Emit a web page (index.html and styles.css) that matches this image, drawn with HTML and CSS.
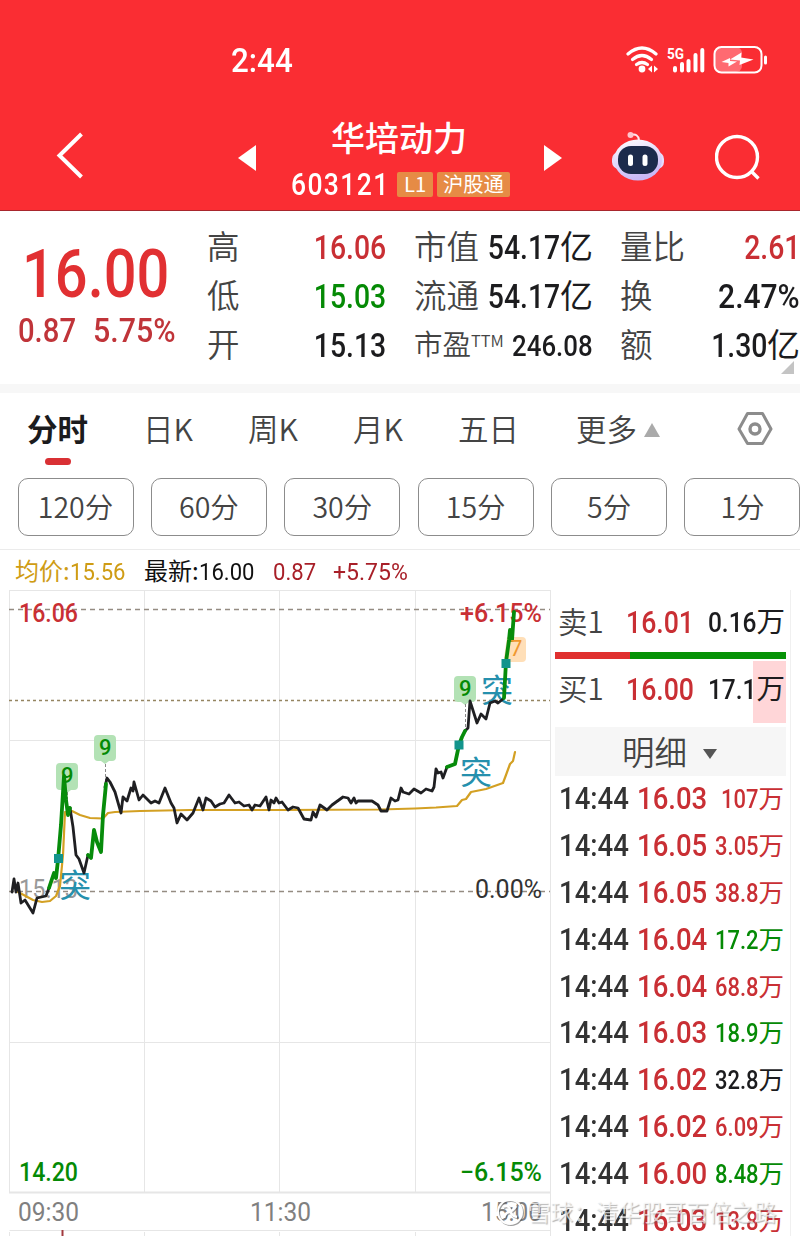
FILE: index.html
```html
<!DOCTYPE html>
<html lang="zh-CN">
<head>
  <meta charset="UTF-8" />
  <meta name="viewport" content="width=device-width, initial-scale=1.0"/>
  <title>华培动力 603121</title>
  <link rel="stylesheet" href="styles.css">
</head>
<body>
  <header class="header">
    <div class="statusbar">
      <span class="clock num">2:44</span>
      <svg class="status-icons" width="146" height="34" viewBox="0 0 146 34">
        <g fill="none" stroke="#fff" stroke-width="3.2" stroke-linecap="round">
          <path d="M4 11 Q18 -1 32 11"/>
          <path d="M8.500 16.500 Q18 8.500 27.500 16.500"/>
          <path d="M12.500 21.500 Q18 17.500 23.500 21.500"/>
        </g>
        <circle cx="18" cy="26" r="3.400" fill="#fff"/>
        <path d="M28 22.500v7l-4-3.500zM30 22.500v7l4-3.500z" fill="#fff"/>
        <text class="net" x="43" y="16" textLength="17" lengthAdjust="spacingAndGlyphs">5G</text>
        <g stroke="#fff" stroke-width="4" stroke-linecap="round">
          <path d="M51 25v2.500M58 21v6.500M64.500 18v9.500M71.500 12v15.500M78.300 7v20.500"/>
        </g>
        <rect x="91" y="4" width="27" height="25" rx="6" fill="#ff6a71"/>
        <rect x="90.500" y="4" width="47" height="25.500" rx="7" fill="none" stroke="#fff" stroke-width="2"/>
        <path d="M141.500 14v6" stroke="#fff" stroke-width="3" stroke-linecap="round"/>
        <path d="M117.500 9.500l-.5 5 12.500 2-14 5.500.5-4.500-10-1z" fill="#fff"/>
        <path d="M97.500 19l8.500-4v3l7 .5-8.500 5v-3.500z" fill="#fff"/>
      </svg>
    </div>
    <nav class="titlebar">
      <svg class="back" width="28" height="48" viewBox="0 0 28 48"><path d="M25.500 2L3.500 23.500L25.500 45" fill="none" stroke="#fff" stroke-width="4"/></svg>
      <svg class="prev" width="18" height="26" viewBox="0 0 18 26"><path d="M18 0v26L0 13z" fill="#fff"/></svg>
      <div class="stock">
        <h1>华培动力</h1>
        <div class="code"><span class="code-no">603121</span><span class="tag tag-l1">L1</span><span class="tag">沪股通</span></div>
      </div>
      <svg class="next" width="18" height="26" viewBox="0 0 18 26"><path d="M0 0v26L18 13z" fill="#fff"/></svg>
      <svg class="robot" width="54" height="50" viewBox="0 0 54 50">
        <defs>
          <linearGradient id="shell" x1="0" y1="0" x2="0.3" y2="1">
            <stop offset="0" stop-color="#fff"/><stop offset="1" stop-color="#c9b8f6"/>
          </linearGradient>
        </defs>
        <path d="M20 4Q27 2 28 9" fill="none" stroke="#ffe6ee" stroke-width="2"/>
        <circle cx="19.500" cy="4" r="3" fill="#ffc4cc"/>
        <rect x="1" y="21" width="52" height="17" rx="7" fill="#e6dcfb"/>
        <ellipse cx="27" cy="29" rx="24" ry="20.500" fill="url(#shell)"/>
        <rect x="7" y="15" width="40" height="28" rx="13" fill="#1c2b4c"/>
        <rect x="17" y="23.500" width="5" height="11.500" rx="2.500" fill="#fff"/>
        <rect x="31.500" y="23.500" width="5" height="11.500" rx="2.500" fill="#fff"/>
      </svg>
      <svg class="search" width="48" height="48" viewBox="0 0 48 48"><circle cx="22" cy="23" r="20.500" fill="none" stroke="#fff" stroke-width="3.400"/><path d="M36 37l7.500 7.500" stroke="#fff" stroke-width="3.400"/></svg>
    </nav>
  </header>

  <section class="quote">
    <div class="last">
      <div class="price num">16.00</div>
      <div class="change"><span class="num">0.87</span><span class="num pct">5.75%</span></div>
    </div>
    <dl class="col">
      <dt>高</dt><dd class="red"><span class="num">16.06</span></dd>
      <dt>低</dt><dd class="green"><span class="num">15.03</span></dd>
      <dt>开</dt><dd><span class="num">15.13</span></dd>
    </dl>
    <dl class="col">
      <dt>市值</dt><dd><span class="num">54.17</span>亿</dd>
      <dt>流通</dt><dd><span class="num">54.17</span>亿</dd>
      <dt class="ttm">市盈<sup>TTM</sup></dt><dd class="pe"><span class="num">246.08</span></dd>
    </dl>
    <dl class="col col-last">
      <dt>量比</dt><dd class="red"><span class="num">2.61</span></dd>
      <dt>换</dt><dd><span class="num pct">2.47%</span></dd>
      <dt>额</dt><dd><span class="num">1.30</span>亿</dd>
    </dl>
    <i class="corner"></i>
  </section>

  <nav class="tabs">
    <a class="active">分时</a>
    <a>日K</a>
    <a>周K</a>
    <a>月K</a>
    <a>五日</a>
    <a class="more">更多<i class="up"></i></a>
    <svg class="gear" width="36" height="36" viewBox="0 0 36 36"><g fill="none" stroke="#8c8c8c"><path d="M10.500 2.500h15L34 18l-8.500 14.500h-15L2 18z" stroke-width="3" stroke-linejoin="round"/><circle cx="18" cy="18" r="5" stroke-width="3.400"/></g></svg>
  </nav>
  <div class="periods">
    <button>120分</button>
    <button>60分</button>
    <button>30分</button>
    <button>15分</button>
    <button>5分</button>
    <button>1分</button>
  </div>

  <div class="legend">
    <span class="avg">均价:<b class="num">15.56</b></span>
    <span class="now">最新:<b class="num">16.00</b></span>
    <span class="diff num">0.87</span>
    <span class="rate num">+5.75%</span>
  </div>

  <main class="main">
    <svg class="chart" width="552" height="646" viewBox="0 590 552 646">
      <g class="grid">
        <path d="M9.500 590.500H550.500M9.500 740.500H550.500M9.500 1042.500H550.500M9.500 1230.500H550.500"/>
        <path d="M9.500 590V1192M144.500 590V1192M279.500 590V1192M415.500 590V1192M550.500 590V1236"/>
        <path d="M9.500 1232V1236M144.500 1232V1236M279.500 1232V1236M415.500 1232V1236"/>
        <path d="M9 1192.500H551" stroke-width="2"/>
      </g>
      <path class="dash" d="M9 609.500H550M9 891.500H550"/>
      <path class="dots" d="M9 700.500H550"/>
      <path d="M62.500 1230V1236" stroke="#a23a3e" stroke-width="2"/>

      <text class="label red" x="19" y="622" textLength="59" lengthAdjust="spacingAndGlyphs">16.06</text>
      <text class="label red" x="460" y="622" textLength="82" lengthAdjust="spacingAndGlyphs">+6.15%</text>
      <text class="label base" x="19" y="898" textLength="59" lengthAdjust="spacingAndGlyphs">15.13</text>
      <text class="label dark" x="475" y="898" textLength="67" lengthAdjust="spacingAndGlyphs">0.00%</text>
      <text class="label green" x="19" y="1181" textLength="59" lengthAdjust="spacingAndGlyphs">14.20</text>
      <text class="label green" x="460" y="1181" textLength="82" lengthAdjust="spacingAndGlyphs">−6.15%</text>
      <text class="label time" x="18" y="1221" textLength="61" lengthAdjust="spacingAndGlyphs">09:30</text>
      <text class="label time" x="250" y="1221" textLength="61" lengthAdjust="spacingAndGlyphs">11:30</text>
      <text class="label time" x="481" y="1221" textLength="61" lengthAdjust="spacingAndGlyphs">15:00</text>

      <g class="pin">
        <path d="M60 763h14a4 4 0 0 1 4 4v19a4 4 0 0 1-4 4h-3l-4 3-4-3h-3a4 4 0 0 1-4-4v-19a4 4 0 0 1 4-4z"/>
        <path d="M98 735h14a4 4 0 0 1 4 4v18a4 4 0 0 1-4 4h-3l-4 3-4-3h-3a4 4 0 0 1-4-4v-18a4 4 0 0 1 4-4z"/>
        <path d="M458 676h14a4 4 0 0 1 4 4v18a4 4 0 0 1-4 4h-3l-4 3-4-3h-3a4 4 0 0 1-4-4v-18a4 4 0 0 1 4-4z"/>
      </g>
      <path class="pin7" d="M507 637h15a4 4 0 0 1 4 4v17a4 4 0 0 1-4 4h-13l-5-4z"/>
      <path class="stem" d="M105.500 764V780M465.500 704V730M67.500 792V806"/>

      <text class="tu" x="59" y="897">突</text>
      <text class="tu" x="481" y="702">突</text>
      <text class="tu" x="460" y="784">突</text>
      <polyline class="line avg-line" points="16,891 20,893 33,900 42,902 50,901 56,896 60,886 63,855 65,812 72,811 80,815 90,818 103,818.500 108,813 115,812 140,811 190,810 280,810 380,809.500 415,808.500 436,807.500 457,806 462,800 466,799 471,792 486,789 503,783 506,775 510,764 513,761 515,752"/>
      <g class="line price-line">
        <polyline points="12,892 14,879 16,892 18,883 21,903 25,900 33,913 37,898 46,896 49,888"/>
        <polyline points="70,808 73,827 76,855 79,859 84,873 88,855"/>
        <polyline points="105,787 107,778 110,782 115,792 121,813 123,797 127,801 131,788 133,791 134,782 139,800 143,795 151,803 155,801 159,803 165,788 171,803 174,808 177,823 181,814 187,820 193,813 199,798 203,810 206,798 211,801 215,807 220,804 224,803 229,795 235,803 239,802 244,806 249,805 252,810 255,805 260,806 266,797 269,810 271,800 274,803 276,798 279,803 282,802 288,810 293,807 298,808 304,819 311,820 313,812 316,817 320,805 327,810 332,805 343,797 348,798 351,803 354,798 356,803 358,801 372,801 378,805 381,811 387,811 391,798 395,801 398,800 401,788 403,792 409,794 414,789 421,793 426,789 432,791 434,787 436,769 438,773 441,772 443,778 447,767"/>
        <polyline points="465,731 468,728 470,701 477,723 481,714 486,719 490,703 495,701 498,703 503,699"/>
      </g>
      <g class="line up-line">
        <polyline points="49,888 54,873 56,878 58,860 61,825 64,776 66,800 68,815 70,808"/>
        <polyline points="88,855 91,858 94,830 97,842 101,852 103,815 106,784"/>
        <polyline points="447,767 455,764 459,745 462,737 465,731"/>
        <polyline points="504,698 506,662 509,640 510,630 512,640 514,612"/>
      </g>
      <g class="mark"><rect x="54" y="854" width="9" height="9"/><rect x="454.500" y="740.500" width="9" height="9"/><rect x="501.500" y="659" width="9" height="9"/></g>
      <text class="pin-no" x="61" y="783">9</text>
      <text class="pin-no" x="99" y="755">9</text>
      <text class="pin-no" x="459" y="696">9</text>
      <text class="pin-no seven" x="510" y="656">7</text>
    </svg>

    <aside class="book">
      <div class="level"><span class="side">卖1</span><span class="num lp">16.01</span><span class="lv"><b class="num">0.16</b>万</span></div>
      <div class="ratio"><i class="sell"></i><i class="buy"></i></div>
      <div class="level bid"><span class="side">买1</span><span class="num lp">16.00</span><span class="lv"><b class="num">17.1</b>万</span></div>
      <div class="detail-head">明细<i class="down"></i></div>
      <ul class="ticks">
        <li><span class="num t">14:44</span><span class="num p">16.03</span><span class="v red"><b class="num">107</b>万</span></li>
        <li><span class="num t">14:44</span><span class="num p">16.05</span><span class="v red"><b class="num">3.05</b>万</span></li>
        <li><span class="num t">14:44</span><span class="num p">16.05</span><span class="v red"><b class="num">38.8</b>万</span></li>
        <li><span class="num t">14:44</span><span class="num p">16.04</span><span class="v green"><b class="num">17.2</b>万</span></li>
        <li><span class="num t">14:44</span><span class="num p">16.04</span><span class="v red"><b class="num">68.8</b>万</span></li>
        <li><span class="num t">14:44</span><span class="num p">16.03</span><span class="v green"><b class="num">18.9</b>万</span></li>
        <li><span class="num t">14:44</span><span class="num p">16.02</span><span class="v"><b class="num">32.8</b>万</span></li>
        <li><span class="num t">14:44</span><span class="num p">16.02</span><span class="v red"><b class="num">6.09</b>万</span></li>
        <li><span class="num t">14:44</span><span class="num p">16.00</span><span class="v green"><b class="num">8.48</b>万</span></li>
        <li><span class="num t">14:44</span><span class="num p">16.03</span><span class="v red"><b class="num">13.8</b>万</span></li>
      </ul>
    </aside>
  </main>

  <div class="watermark">
    <svg width="28" height="28" viewBox="0 0 28 28"><circle cx="14" cy="14" r="12" fill="none" stroke="#fff" stroke-width="2"/><path d="M7 9q6-3 7 3t7 7M20 8q-3 5-7 6t-5 6" fill="none" stroke="#fff" stroke-width="2.500"/></svg>
    <span>雪球：清华股哥百倍之路</span>
  </div>
</body>
</html>
```
FILE: styles.css
```css
* {
  box-sizing: border-box;
}
body {
  margin: 0;
  width: 800px;
  height: 1236px;
  overflow: hidden;
  position: relative;
  background: #fff;
  color: #1c1c1e;
  font-family: 'Noto Sans CJK SC', sans-serif;
}
h1, dl, dd, ul {
  margin: 0;
  padding: 0;
}
b {
  font-weight: inherit;
}
/* narrow figures, squeezed from Roboto */
.num {
  display: inline-block;
  font-family: Roboto, 'Noto Sans CJK SC', sans-serif;
  font-weight: 500;
  transform: scaleX(0.86);
  transform-origin: left center;
  white-space: nowrap;
}
.red { color: #c92f34; fill: #c92f34; }
.green { color: #058a05; fill: #058a05; }

/* header */
.header {
  height: 211px;
  background: #fa2d33;
  border-bottom: 1px solid #a8262d;
  color: #fff;
}
.statusbar {
  height: 88px;
  padding: 43px 0 0 231px;
  display: flex;
  align-items: flex-start;
}
.clock {
  width: 391px;
  font-size: 33px;
  line-height: 36px;
  transform: scaleX(0.95);
}
.status-icons {
  margin-left: 2px;
}
.net {
  font: 700 15px Roboto, sans-serif;
  fill: #fff;
}
.titlebar {
  height: 122px;
  padding-top: 28px;
  display: flex;
  align-items: flex-start;
}
.back { margin: 16px 0 0 56px; }
.prev { margin: 29px 0 0 154px; }
.stock {
  width: 220px;
  margin: 0 0 0 35px;
}
.stock h1 {
  padding-left: 40px;
  font-size: 34px;
  font-weight: 500;
  line-height: 41px;
}
.code {
  display: flex;
  align-items: center;
  height: 28px;
  margin-top: 13px;
}
.code-no {
  width: 106px;
  padding-top: 2px;
  font: 500 31px/28px Roboto, sans-serif;
  letter-spacing: 1.600px;
  transform: scaleX(0.855);
  transform-origin: left;
}
.tag {
  height: 25px;
  padding: 0 6px;
  background: #e68b45;
  border-radius: 2px;
  font-size: 20.300px;
  line-height: 23px;
}
.tag-l1 {
  width: 36px;
  margin-right: 4px;
  padding: 0 7px;
}
.next { margin: 29px 0 0 33px; }
.robot { margin: 15px 0 0 49px; }
.search { margin: 18px 0 0 50px; }

/* quote panel */
.quote {
  position: relative;
  display: grid;
  grid-template-columns: 207px 179px 179px 180px;
  height: 182px;
  border-bottom: 9px solid #f7f7f7;
}
.price {
  margin: 33px 0 0 22px;
  color: #e13032;
  font-size: 66px;
  line-height: 62px;
  transform: scaleX(0.875);
}
.change {
  display: flex;
  padding-left: 18px;
  margin-top: 6px;
  color: #c03439;
  font-size: 32.500px;
  line-height: 38px;
}
.change .num {
  width: 75px;
  transform: scaleX(0.9);
}
.change .pct {
  transform: scaleX(0.935);
}
.col {
  display: grid;
  grid-template-columns: 60px 1fr;
  grid-auto-rows: 49px;
  padding-top: 12px;
  line-height: 44px;
}
.col + .col {
  margin-left: 28px;
  margin-right: -28px;
}
.col + .col-last {
  margin-left: 55px;
  margin-right: -55px;
}
.col dt {
  font-size: 32.500px;
  font-weight: 350;
  color: #444;
  white-space: nowrap;
}
.col dd {
  font-size: 33px;
  line-height: 45px;
  text-align: right;
  white-space: nowrap;
}
.col .num {
  transform-origin: right center;
}
.col .pct {
  transform: scaleX(0.91);
}
.col .ttm {
  font-size: 28.500px;
}
.ttm sup {
  font-size: 16.500px;
  line-height: 0;
  vertical-align: 8px;
}
.col .pe {
  font-size: 30px;
}
.corner {
  position: absolute;
  right: 6px;
  bottom: 10px;
  border-left: 13px solid transparent;
  border-bottom: 13px solid #c4c4c4;
}

/* tabs */
.tabs {
  height: 85px;
  display: flex;
  color: #444;
  font-size: 30.500px;
  font-weight: 350;
  line-height: 70px;
}
.tabs a { position: relative; width: 105px; white-space: nowrap; }
.tabs .active {
  width: 117px;
  padding-left: 27px;
  margin-right: 26px;
  color: #1b1b1d;
  font-weight: 700;
}
.active::after {
  content: '';
  position: absolute;
  left: 45px;
  top: 65px;
  width: 26px;
  height: 7px;
  border-radius: 4px;
  background: #d93034;
}
.tabs .more { width: 161px; margin-left: 13px; }
.up {
  display: inline-block;
  margin-left: 7px;
  vertical-align: 4px;
  border: 8px solid transparent;
  border-top: 0;
  border-bottom: 14px solid #aaa;
}
.gear { margin-top: 18px; }
.periods {
  display: flex;
  gap: 17.400px;
  height: 72px;
  padding-left: 17.500px;
  border-bottom: 1px solid #ebebeb;
}
.periods button {
  flex: 0 0 116px;
  height: 58px;
  padding: 0 0 3px;
  border: 1px solid #8c8c8c;
  border-radius: 10px;
  background: #fff;
  color: #444;
  font: 350 28.500px 'Noto Sans CJK SC', sans-serif;
}

/* legend line above the chart */
.legend {
  display: flex;
  height: 40px;
  padding-left: 15px;
  color: #111;
  font-size: 24px;
  line-height: 39px;
  white-space: nowrap;
}
.legend .num { font-weight: 400; transform: scaleX(0.92); }
.avg { width: 129px; color: #cf9c14; }
.now { width: 129px; }
.diff, .rate { width: 60px; color: #a81f28; line-height: 44px; }
.legend .rate { transform: scaleX(0.96); }

/* chart */
.main {
  display: flex;
  height: 646px;
}
.chart {
  flex: none;
  display: block;
}
.grid {
  fill: none;
  stroke: #e6e6e6;
}
.dash {
  stroke: #958c82;
  stroke-width: 1.300;
  stroke-dasharray: 5 4;
}
.dots {
  stroke: #958561;
  stroke-width: 1.700;
  stroke-dasharray: 3 3;
}
.stem {
  stroke: #888;
  stroke-dasharray: 3 2;
}
.label {
  font: 500 26px Roboto, sans-serif;
}
.base { fill: #999; font-weight: 400; }
.dark { fill: #333; font-weight: 400; }
.time { fill: #808080; font-weight: 400; }
.line {
  fill: none;
  stroke-width: 2.800;
  stroke-linejoin: round;
  stroke-linecap: round;
}
.avg-line { stroke: #d3a023; stroke-width: 2.200; }
.price-line { stroke: #1f1f22; }
.up-line { stroke: #078c0b; stroke-width: 3.800; }
.mark { fill: #12948c; }
.pin { fill: #b3e2b5; }
.pin7 { fill: #ffdfb8; }
.pin-no {
  font: 500 22px Roboto, sans-serif;
  fill: #058a05;
}
.seven { fill: #f0982e; font-weight: 400; }
.tu {
  font: 400 32px 'Noto Sans CJK SC', sans-serif;
  fill: #2590ad;
}

/* order book */
.book {
  width: 239px;
  padding-left: 3px;
  padding-right: 4px;
  border-right: 1px solid #f0f0f0;
}
.level {
  display: flex;
  height: 62px;
  padding-left: 3px;
  line-height: 64px;
}
.side {
  width: 68px;
  margin-top: -2px;
  color: #444;
  font-size: 29.500px;
  font-weight: 350;
}
.lp {
  width: 82px;
  margin-top: 1px;
  color: #c92f34;
  font-size: 31px;
}
.lv {
  width: 77px;
  display: flex;
  justify-content: flex-end;
  align-items: baseline;
  margin-top: -2px;
  font-size: 28.500px;
}
.lv .num, .v .num {
  transform-origin: right center;
}
.ratio {
  display: flex;
  height: 7px;
}
.sell { width: 75px; background: #e0302f; }
.buy { flex: 1; background: #069206; }
.bid {
  margin-top: 2px;
  line-height: 56px;
  background: linear-gradient(#ffd6d8, #ffd6d8) right / 33px 100% no-repeat;
}
.detail-head {
  height: 49px;
  margin: 4px 0 -3px;
  padding-left: 67px;
  background: #f6f6f6;
  color: #444;
  font-size: 32.500px;
  font-weight: 350;
  line-height: 47px;
}
.down {
  display: inline-block;
  margin-left: 16px;
  vertical-align: 6px;
  border: 7px solid transparent;
  border-bottom: 0;
  border-top: 10px solid #555;
}
.ticks {
  list-style: none;
}
.ticks li {
  display: flex;
  height: 46.900px;
  padding: 0 2px 0 4px;
  line-height: 50px;
  white-space: nowrap;
}
.t { width: 78px; color: #333; font-size: 32px; }
.p { width: 60px; color: #c92f34; font-size: 32px; }
.v {
  flex: 1;
  display: flex;
  justify-content: flex-end;
  align-items: baseline;
  margin-top: -1px;
  font-size: 25.500px;
}

.watermark {
  position: absolute;
  left: 496px;
  top: 1197px;
  display: flex;
  align-items: center;
  gap: 4px;
  color: rgba(255, 255, 255, 0.7);
  font-size: 22.600px;
  line-height: 30px;
  text-shadow: 1px 1px 1px rgba(90, 90, 90, 0.45);
  white-space: nowrap;
}
.watermark svg {
  filter: drop-shadow(1px 1px 0.500px rgba(90, 90, 90, 0.6));
}
```
